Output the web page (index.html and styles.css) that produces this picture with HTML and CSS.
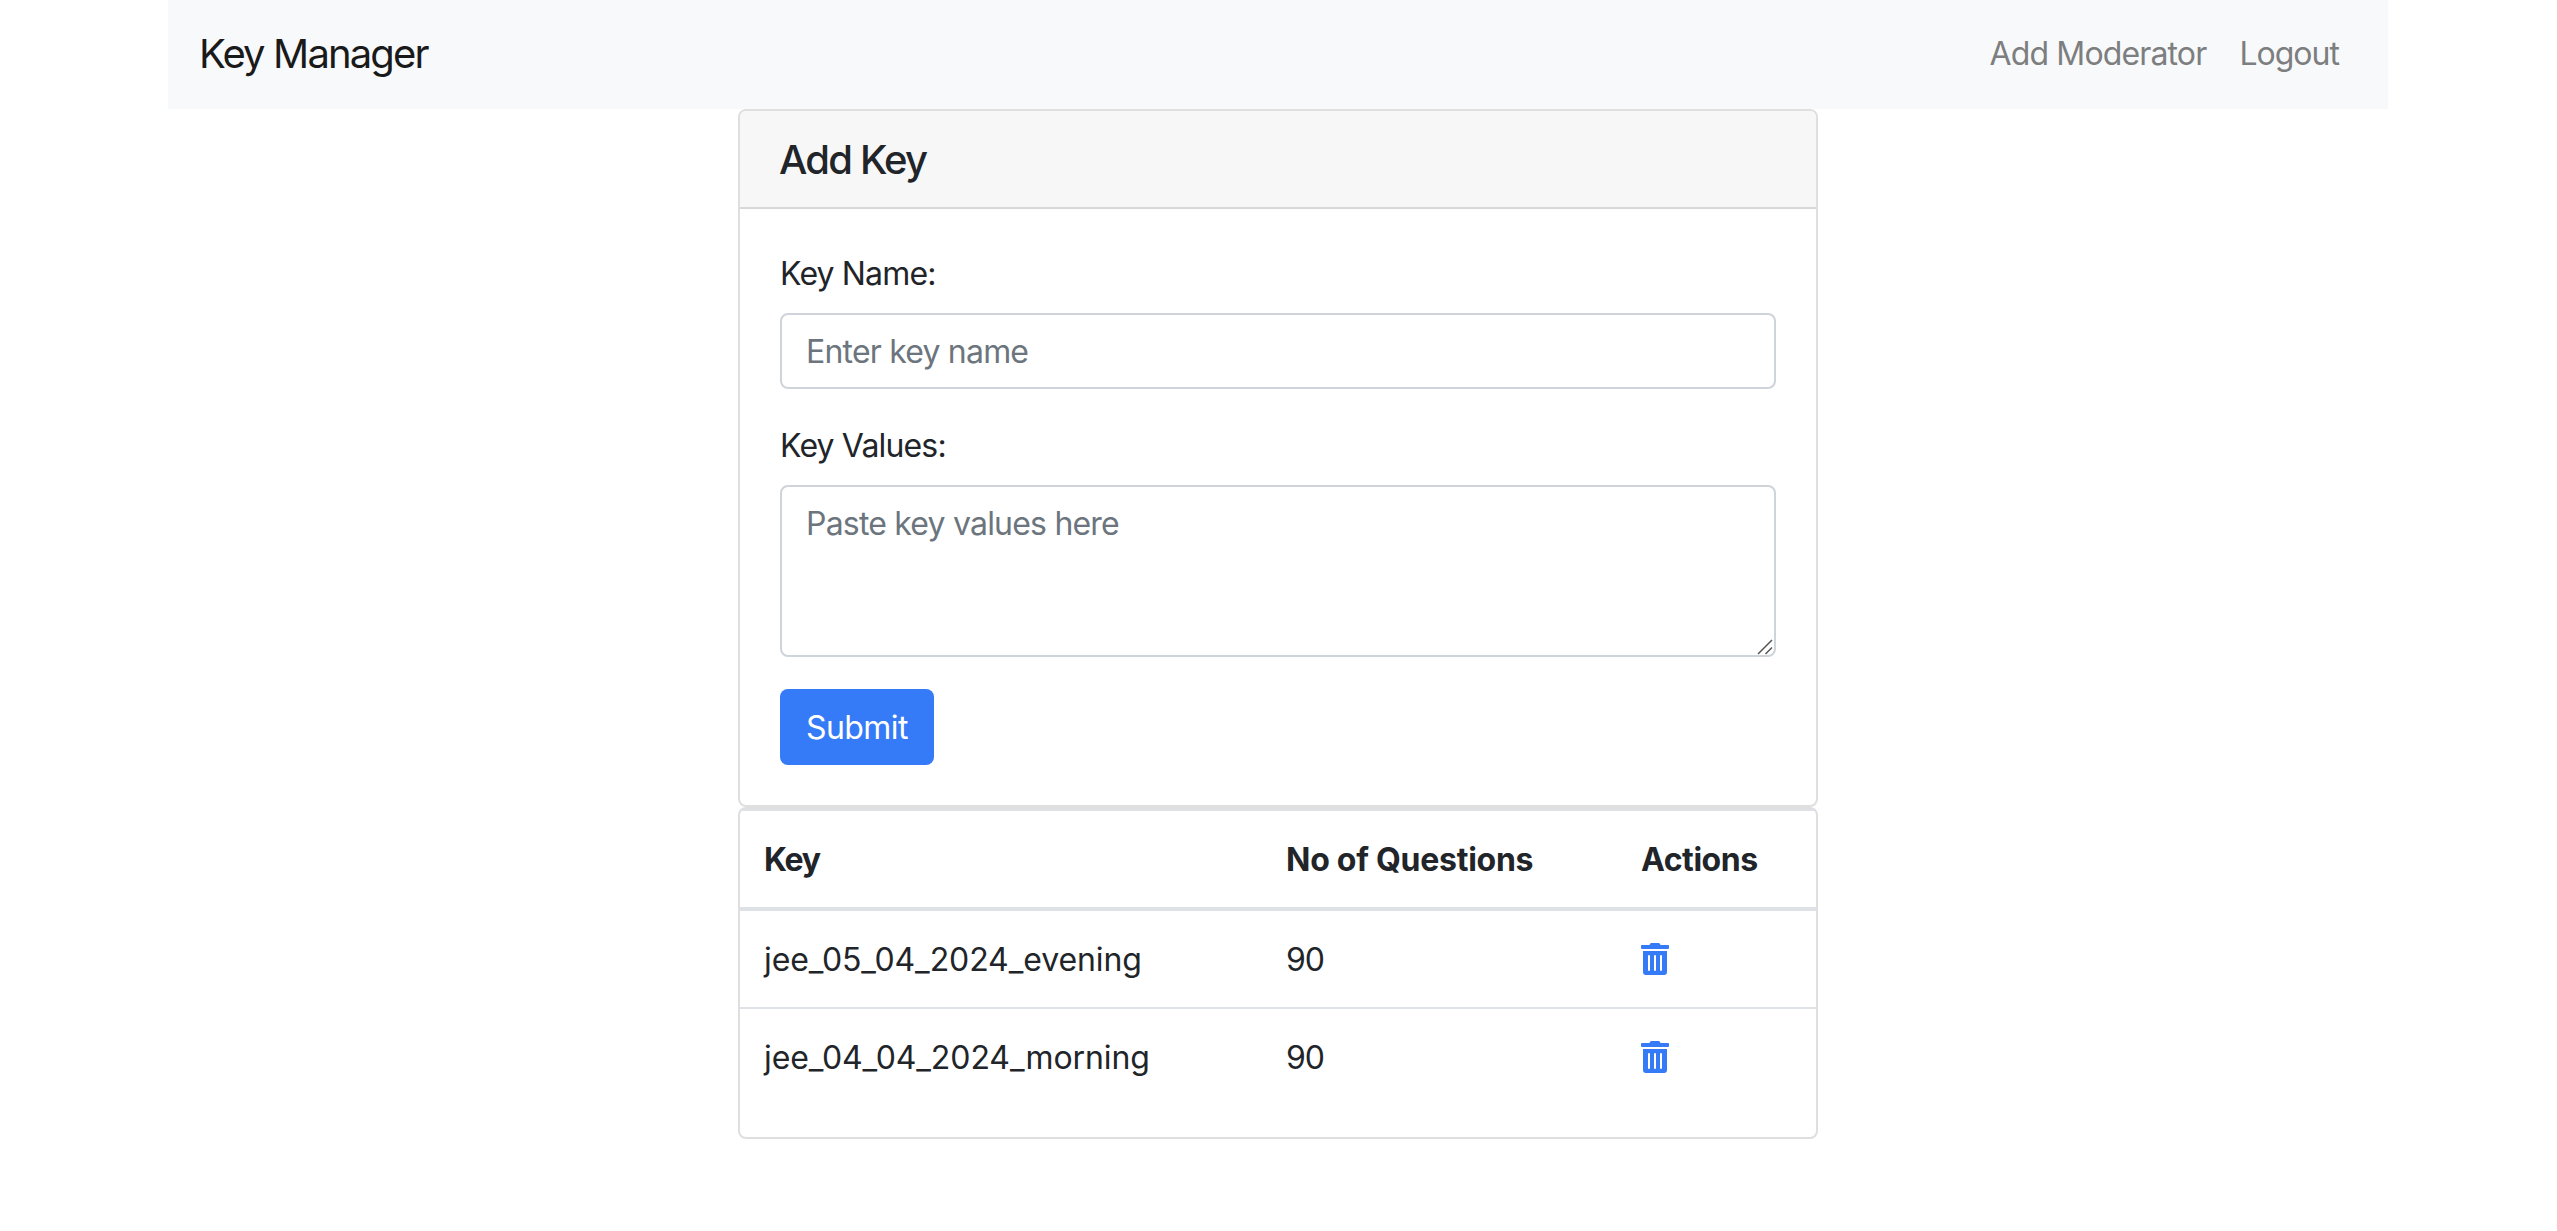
FILE: index.html
```html
<!DOCTYPE html>
<html lang="en">
<head>
<meta charset="utf-8">
<title>Key Manager</title>
<link rel="stylesheet" href="styles.css">
</head>
<body>
<svg class="sprite" aria-hidden="true">
  <symbol id="trash" viewBox="0 0 448 512">
    <path d="M32 464a48 48 0 0 0 48 48h288a48 48 0 0 0 48-48V128H32zm272-256a16 16 0 0 1 32 0v224a16 16 0 0 1-32 0zm-96 0a16 16 0 0 1 32 0v224a16 16 0 0 1-32 0zm-96 0a16 16 0 0 1 32 0v224a16 16 0 0 1-32 0zM432 32H312l-9.400-18.700A24 24 0 0 0 281.100 0H166.800a23.720 23.720 0 0 0-21.400 13.300L136 32H16A16 16 0 0 0 0 48v32a16 16 0 0 0 16 16h416a16 16 0 0 0 16-16V48a16 16 0 0 0-16-16z"/>
  </symbol>
</svg>
<div class="page">
  <nav class="navbar">
    <a class="brand">Key Manager</a>
    <div class="nav-links">
      <a class="nav-link">Add Moderator</a>
      <a class="nav-link nav-link-logout">Logout</a>
    </div>
  </nav>
  <main class="content">
    <section class="card">
      <h5 class="card-header">Add Key</h5>
      <form class="card-body">
        <div class="form-group">
          <label class="label" for="name">Key Name:</label>
          <input class="control" id="name" type="text" placeholder="Enter key name">
        </div>
        <div class="form-group">
          <label class="label" for="values">Key Values:</label>
          <div class="textarea-wrap">
            <textarea class="control control-area" id="values" placeholder="Paste key values here"></textarea>
            <svg class="grip" viewBox="0 0 16 16"><path d="M1 15 15 1M8.500 15 15 8.500"/></svg>
          </div>
        </div>
        <button class="submit" type="button">Submit</button>
      </form>
    </section>
    <section class="card">
      <table class="table">
        <colgroup><col class="col-key"><col class="col-count"><col class="col-actions"></colgroup>
        <thead>
          <tr><th class="th-key">Key</th><th class="th-count">No of Questions</th><th class="th-actions">Actions</th></tr>
        </thead>
        <tbody>
          <tr><td>jee_05_04_2024_evening</td><td class="count">90</td><td><svg class="trash"><use href="#trash"/></svg></td></tr>
          <tr><td>jee_04_04_2024_morning</td><td class="count">90</td><td><svg class="trash"><use href="#trash"/></svg></td></tr>
        </tbody>
      </table>
    </section>
  </main>
</div>
</body>
</html>
```

FILE: styles.css
```css
* { box-sizing: border-box; }

body {
  margin: 0;
  background: #fff;
  color: #212529;
  font: 400 32px/48px Inter, "Liberation Sans", sans-serif;
  overflow: hidden;
}

.sprite { display: none; }

.page { width: 2556px; }

.navbar {
  width: 2220px;
  height: 109px;
  margin: 0 auto;
  padding: 0 33px 1px 31px;
  display: flex;
  align-items: center;
  justify-content: space-between;
  background: #f8f9fb;
}

.brand {
  font-size: 40px;
  line-height: 60px;
  letter-spacing: -1.86px;
  color: #1a1a1a;
}

.nav-links { display: flex; }

.nav-link {
  padding: 0 17px 0 16px;
  letter-spacing: -0.86px;
  color: #7d7e7f;
}

.nav-link-logout {
  padding-right: 16px;
  letter-spacing: -0.98px;
}

.content { width: 1080px; margin: 0 auto; }

.card {
  border: 2px solid #dfdfdf;
  border-radius: 8px;
  background: #fff;
}

.card-header {
  margin: 0;
  padding: 25px 40px 23px 39px;
  border-bottom: 2px solid #d8d8d8;
  border-radius: 6px 6px 0 0;
  background: #f7f7f7;
  font-size: 40px;
  font-weight: 500;
  line-height: 48px;
  letter-spacing: -1.8px;
}

.card-body { padding: 40px; }

.form-group { margin-bottom: 32px; }

.label {
  display: block;
  padding-top: 1px;
  margin-bottom: 15px;
  letter-spacing: -0.85px;
}

.control {
  display: block;
  width: 100%;
  height: 76px;
  margin: 0;
  padding: 12px 24px;
  border: 2px solid #ced4da;
  border-radius: 8px;
  outline: none;
  background: #fff;
  font: inherit;
  letter-spacing: -0.8px;
}

.control::placeholder { color: #6c757d; opacity: 1; }

.textarea-wrap { position: relative; }

.control-area {
  height: 172px;
  padding-top: 13px;
  resize: none;
  overflow: hidden;
}

.grip {
  position: absolute;
  right: 3px;
  bottom: 2px;
  width: 16px;
  height: 16px;
  fill: none;
  stroke: #555;
  stroke-width: 1.5;
}

.submit {
  display: block;
  width: 154px;
  height: 76px;
  padding: 2px 0 0 26px;
  border: 0;
  border-radius: 8px;
  background: #357af6;
  color: #fff;
  font: inherit;
  letter-spacing: -0.57px;
  text-align: left;
}

.table {
  width: 100%;
  margin-bottom: 32px;
  border-spacing: 0;
  table-layout: fixed;
}

.col-key { width: 521px; }
.col-count { width: 356px; }

.table th,
.table td {
  height: 98px;
  padding: 25px 24px 23px;
  border-top: 2px solid #dee2e6;
  text-align: left;
  vertical-align: top;
}

.table th {
  height: 102px;
  border-bottom: 4px solid #dee2e6;
  font-weight: 700;
}

.table tbody tr:first-child td {
  height: 96px;
  border-top: 0;
}

.table td { letter-spacing: -0.08px; }

.table .th-count,
.table .count { padding-left: 25px; }

.table .count { letter-spacing: -1px; }

.th-key { letter-spacing: -1.2px; }
.th-count { letter-spacing: -0.26px; }
.th-actions { letter-spacing: -0.44px; }

.trash {
  display: block;
  width: 28px;
  height: 32px;
  margin-top: 7px;
  fill: #357af6;
}
```
